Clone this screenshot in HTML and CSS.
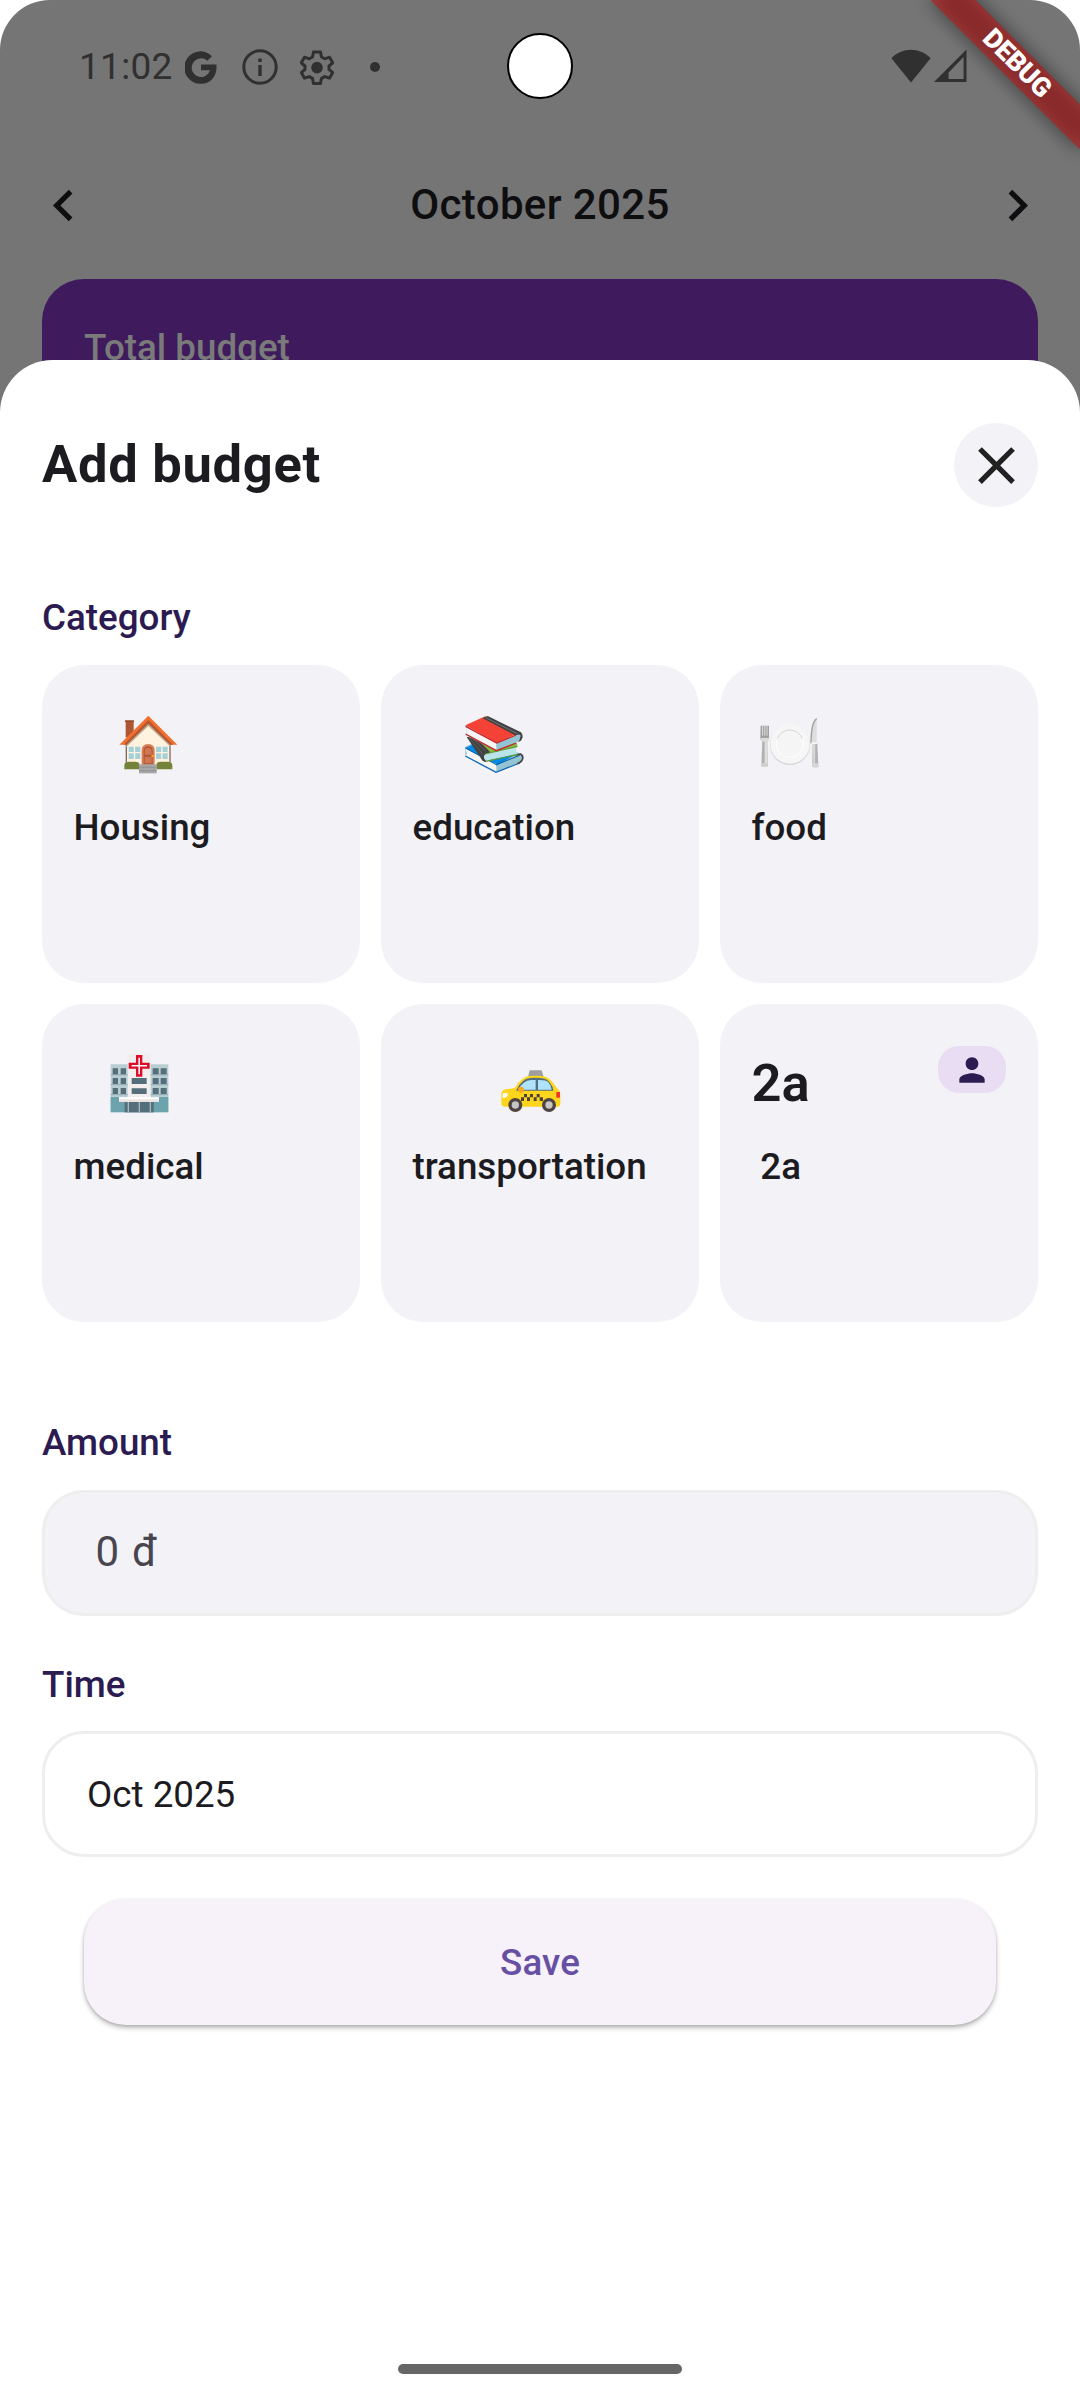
FILE: index.html
```
<!DOCTYPE html>
<html lang="en">
<head>
<meta charset="utf-8">
<title>Add budget</title>
<link rel="stylesheet" href="styles.css">
</head>
<body>
<div class="screen">
  <div class="page">
    <header class="status">
      <span class="clock">11:02</span>
      <svg class="st-google" width="32" height="33" viewBox="0 0 32 33"><path d="M27 5.200 22.300 9.800A9.300 9.300 0 1 0 24.900 19.300H16V13.600H31.400C32.600 24 26.400 32.700 16.400 32.700A16.200 16.200 0 1 1 27 5.200Z" fill="#303030"/></svg>
      <svg class="st-info" width="36" height="36" viewBox="0 0 36 36"><circle cx="18" cy="18" r="16.200" fill="none" stroke="#303030" stroke-width="3"/><path d="M16.300 9.500h3.400v3.400h-3.400zM16.300 16h3.400v11h-3.400z" fill="#303030"/></svg>
      <svg class="st-gear" width="34" height="35" viewBox="0 0 34 35"><path d="M13.500 2h7l1 5 3.200 1.800 4.800-1.600 3.200 5.600-3.700 3.200v3.400l3.700 3.200-3.200 5.600-4.800-1.600-3.200 1.800-1 5h-7l-1-5-3.200-1.800-4.800 1.600L1.300 22.600 5 19.400V16L1.300 12.800 4.500 7.200l4.800 1.600L12.500 7z" fill="none" stroke="#303030" stroke-width="3" stroke-linejoin="round"/><circle cx="17" cy="17.600" r="5.800" fill="#303030"/></svg>
      <span class="st-dot"></span>
      <svg class="st-wifi" width="40" height="34" viewBox="0 0 40 34"><path d="M.4 9.200C11 -2.200 29 -2.200 39.600 9.200L20 33.400Z" fill="#303030"/></svg>
      <svg class="st-signal" width="33" height="34" viewBox="0 0 33 34"><path fill-rule="evenodd" d="M32.500.5V33H0ZM29.600 8 14.600 23.400V30H29.600Z" fill="#303030"/></svg>
    </header>
    <nav class="month">
      <svg width="63" height="63" viewBox="0 0 24 24"><path d="M15.410 7.410 14 6l-6 6 6 6 1.410-1.410L10.830 12z" fill="#0e0e10"/></svg>
      <span class="month-name">October 2025</span>
      <svg width="63" height="63" viewBox="0 0 24 24"><path d="M8.590 16.590 10 18l6-6-6-6-1.410 1.410L13.170 12z" fill="#0e0e10"/></svg>
    </nav>
    <section class="total">Total budget</section>
  </div>

  <main class="sheet">
    <div class="sheet-head">
      <h1>Add budget</h1>
      <button class="close" aria-label="Close"><svg width="63" height="63" viewBox="0 0 24 24"><path d="M19 6.410 17.590 5 12 10.590 6.410 5 5 6.410 10.590 12 5 17.590 6.410 19 12 13.410 17.590 19 19 17.590 13.410 12z" fill="#212121"/></svg></button>
    </div>

    <h2 class="label">Category</h2>
    <div class="grid">
      <div class="card"><div class="item housing">
        <svg width="64" height="64" viewBox="259 171 192 192">
          <path d="M288 197h24v50h-24z" fill="#ae5732"/><path d="M286 196h27v5h-27z" fill="#9c4a29"/>
          <path d="M289 260 356 203l66 57v62H289z" fill="#fff3e0"/>
          <path d="M288 268h4v54h-4zM419 268h4v54h-4z" fill="#806a60"/>
          <path d="M356 203 423 268v8L356 213 290 276v-8z" fill="#bda991"/>
          <path d="M356 182 443 269H424L356 202 288 269H269z" fill="#f26f30"/><path d="M356 195 430 269H421L356 206 291 269H282z" fill="#b55731"/>
          <path d="M297 275h35v37h-35zM379 275h35v37h-35z" fill="#a5d0d8"/><path d="M314.500 275v37M297 293h35M396.500 275v37M379 293h35" stroke="#fff3e0" stroke-width="4"/>
          <path d="M284 343v-12q0-11 12-11h20q14 0 14 11v12zM380 343v-12q0-11 12-11h22q14 0 14 11v12z" fill="#748339"/>
          <path d="M336 330v-43q0-20 19.500-20T375 287v43z" fill="#d87d58"/><path d="M342 328v-39q0-15 13.500-15T369 289v39z" fill="#ad5735"/><path d="M345 299v-10q0-11 10.500-11T366 289v10zM345 305h21v20h-21z" fill="#d27651"/><circle cx="368" cy="303" r="3" fill="#ffc107"/>
          <path d="M328 328h53v27h-53z" fill="#a6a6a6"/><path d="M328 337h53M328 347h53" stroke="#8a8a8a" stroke-width="2"/>
        </svg><span>Housing</span></div></div>
      <div class="card"><div class="item">
        <svg width="64" height="64" viewBox="275 171 192 192">
          <path d="M285 275 345 247 440 292 455 298q6 12-2 24L378 350 285 302z" fill="#94c4d4"/>
          <path d="M285 279 343 252 436 298 377 333z" fill="#0288e5"/>
          <path d="M285 280 378 327V349L285 304 290 296z" fill="#f5f5f5"/><path d="M285 279 378 329 448 301" fill="none" stroke="#01579b" stroke-width="3"/><path d="M285 303 377 352 448 324" fill="none" stroke="#0d66b5" stroke-width="4"/><path d="M436 300 450 297q9 4 7 14t-16 15" fill="none" stroke="#424242" stroke-width="5"/>
          <path d="M290 246 330 246 440 265 442 275 345 300z" fill="#84b944"/>
          <path d="M289 246 318 250 360 292 345 318 337 318z" fill="#424242"/><path d="M298 250 344 306M309 252 354 297" stroke="#686868" stroke-width="2"/>
          <path d="M344 297 435 276 440 297 344 318q-8-10 0-21z" fill="#b9e4ea"/><path d="M344 297 440 275M346 319 442 299" stroke="#609a2e" stroke-width="3.500"/><path d="M352 290q-14 5-14 15t8 15" stroke="#424242" stroke-width="5" fill="none"/>
          <path d="M285 213 379 263 450 234 456 247 450 257 378 287 285 240 290 229z" fill="#94c4d4"/>
          <path d="M286 216 378 263V285L286 238 291 229z" fill="#f5f5f5"/>
          <path d="M285 211 345 184 440 237 379 263z" fill="#f44336"/><path d="M286 214 379 264 438 240M286 237 378 287 438 264" fill="none" stroke="#c62828" stroke-width="4"/>
          <path d="M337 190 352 183 452 232q10 11 0 25l-9 4q9-9 5-20l-15-1z" fill="#424242"/><path d="M346 188 441 236" stroke="#757575" stroke-width="3"/><path d="M437 241q15-6 14 3 0 6-10 10" fill="#94c4d4"/>
        </svg><span>education</span></div></div>
      <div class="card"><div class="item">
        <svg width="64" height="64" viewBox="142 171 192 192">
          <circle cx="241" cy="270" r="60" fill="#d7d7d7"/><circle cx="241" cy="267" r="59" fill="#f6f6f6"/><circle cx="240" cy="266" r="41" fill="#f5f5f5" stroke="#fff" stroke-width="3"/><path d="M203 251a40 40 0 0 1 75 0" fill="none" stroke="#d2d2d2" stroke-width="3"/>
          <path d="M158 251h15l1 83h-19z" fill="#b2b2b2"/><path d="M165 255h8v77h-8z" fill="#dedede"/><path d="M153 212h25v38q0 9-10 9h-6q-10 0-10-9z" fill="#a0a0a0"/><path d="M159 212v30M165.500 212v30M172 212v30" stroke="#e9e9e9" stroke-width="2.500"/><path d="M152 249h27q-1 11-9 11h-8q-8 0-10-11z" fill="#dcdcdc"/><path d="M156 324h15l3 11h-19z" fill="#cfcfcf"/>
          <path d="M321 191v74h-18q-2-68 18-74z" fill="#dedede"/><path d="M321 191q-16 10-17 74" fill="none" stroke="#a0a0a0" stroke-width="4"/><path d="M309 263h14l3 73h-18z" fill="#b2b2b2"/><path d="M310 263h7l-1 65h-5z" fill="#dadada"/><path d="M304 262h19v5h-15z" fill="#f8f8f8"/><path d="M308 325h16l3 11q-8 4-20 0z" fill="#d5d5d5"/>
        </svg><span>food</span></div></div>
      <div class="card"><div class="item">
        <svg width="64" height="64" viewBox="229 168 192 192">
          <path d="M240 208h173v144H240z" fill="#b9ced3"/><path d="M240 306h173v46H240z" fill="#6ca4ae"/>
          <path d="M291 177h69v136h-69z" fill="#f1eeed"/>
          <path d="M246 220h16v19h-16zm24 0h16v19h-16zM246 249h16v18h-16zm24 0h16v18h-16zM246 279h16v18h-16zm24 0h16v18h-16zM366 220h18v19h-18zm24 0h18v19h-18zM366 249h18v18h-18zm24 0h18v18h-18zM366 279h18v18h-18zm24 0h18v18h-18zM303 249h45v18h-45zm0 31h45v17h-45z" fill="#546e7a"/>
          <path d="M240 239.500h51M240 269h51M240 299h51M360 239.500h53M360 269h53M360 299h53" stroke="#91aab2" stroke-width="3"/>
          <path d="M316 180h19v23h22v18h-22v24h-19v-24h-22v-18h22z" fill="#dc0d28"/><path d="M325.500 188v50M303 212h46" stroke="#fff" stroke-width="4.500"/>
          <path d="M282 320h87v32h-87z" fill="#546e7a"/><path d="M293 320v32M326 320v32M359 320v32" stroke="#a5b8be" stroke-width="4"/>
          <path d="M265 307h120v14H265z" fill="#e9e4e2"/><path d="M265 307h120v6H265z" fill="#fff"/>
        </svg><span>medical</span></div></div>
      <div class="card"><div class="item">
        <svg width="64" height="64" viewBox="381 168 192 192">
          <path d="M476 226h36l6 20h-47z" fill="#9e9e9e"/>
          <path d="M391 299q0-15 16-17 15-1 25-4 21-34 45-35 26-3 46 2 15 4 34 33 11 8 11 24v22q0 11-8 11H401q-10 0-10-10z" fill="#fdd51c"/>
          <path d="M435 287q17-36 42-38 26-2 44 2 13 4 24 26l2 10z" fill="#546e7a"/><path d="M442 284q14-27 38-29h14v29zM501 255q23-1 31 7 8 8 10 22h-41z" fill="#aee3fb"/>
          <circle cx="450" cy="284" r="9" fill="#f9a61a"/><path d="M556 291h11v17h-11z" fill="#f9311f"/><path d="M396 294h14q2 12-7 14h-9z" fill="#fffdf3"/>
          <path d="M459 297h9v10h-9zm18 0h9v10h-9zm20 0h9v10h-9zM450 307h9v11h-9zm18 0h9v11h-9zm20 0h9v11h-9zm18 0h10v11h-10z" fill="#4e433b"/>
          <circle cx="433" cy="330" r="21" fill="#4e433e"/><circle cx="433" cy="330" r="11" fill="#c5c5c5"/><circle cx="534" cy="330" r="21" fill="#4e433e"/><circle cx="534" cy="330" r="11" fill="#c5c5c5"/>
        </svg><span>transportation</span></div></div>
      <div class="card"><div class="item"><b class="initials">2a</b><span>2a</span></div>
        <div class="badge"><svg width="38" height="38" viewBox="0 0 24 24"><path d="M12 12c2.210 0 4-1.790 4-4s-1.790-4-4-4-4 1.790-4 4 1.790 4 4 4zm0 2c-2.670 0-8 1.340-8 4v2h16v-2c0-2.660-5.330-4-8-4z" fill="#2b1b50"/></svg></div>
      </div>
    </div>

    <h2 class="label">Amount</h2>
    <div class="field amount">0 đ</div>
    <h2 class="label">Time</h2>
    <div class="field time">Oct 2025</div>
    <button class="save">Save</button>
    <div class="home"></div>
  </main>

  <div class="camera"></div>
  <div class="banner-clip"><div class="banner-shadow"></div><div class="banner">DEBUG</div></div>
</div>
</body>
</html>
```
FILE: styles.css
```
* { box-sizing: border-box; }
body { margin: 0; background: #fff; font-family: Roboto, sans-serif; }
svg { display: block; flex: none; }
h1, h2 { margin: 0; }
button { border: 0; padding: 0; font-family: inherit; }

.screen {
  position: relative;
  width: 1080px;
  height: 2400px;
  overflow: hidden;
  border-radius: 50px 50px 0 0;
  background: #757575;
}
.page { height: 420px; }

.status {
  display: flex;
  align-items: center;
  height: 134px;
  padding: 0 113px 0 79px;
  color: #303030;
}
.clock { width: 106px; font-size: 37px; line-height: 44px; letter-spacing: .3px; margin-top: -1px; }
.st-info { margin-left: 24.500px; }
.st-gear { margin-left: 22px; }
.st-dot { width: 10px; height: 10px; margin-left: 36px; border-radius: 50%; background: #303030; }
.st-wifi { margin-left: auto; margin-right: 3px; margin-top: -2px; }
.st-signal { margin-top: -2px; }

.month {
  display: flex;
  justify-content: space-between;
  align-items: center;
  height: 145px;
  padding: 0 31.500px 2px;
}
.month-name {
  font-size: 42px;
  line-height: 48px;
  font-weight: 500;
  letter-spacing: .39px;
  color: #0e0e10;
  margin-top: -2px;
}
.total {
  height: 141px;
  margin: 0 42px;
  padding: 48px 42px;
  border-radius: 42px 42px 0 0;
  background: #3f1b5e;
  color: #7a7a7a;
  font-size: 36.750px;
  line-height: 42px;
  font-weight: 500;
}

.sheet {
  position: absolute;
  inset: 360px 0 0;
  display: flex;
  flex-direction: column;
  padding: 63px 42px 26px;
  border-radius: 52.500px 52.500px 0 0;
  background: #fff;
}
.sheet-head { display: flex; justify-content: space-between; margin-bottom: 90px; }
.sheet-head h1 { font-size: 52.500px; line-height: 82px; font-weight: 700; letter-spacing: .7px; color: #1c1b1f; }
.close {
  display: flex;
  align-items: center;
  justify-content: center;
  width: 84px;
  height: 84px;
  border-radius: 50%;
  background: #f2f2f7;
}
.label { height: 42px; font-size: 36.750px; line-height: 42px; font-weight: 500; color: #2b1b50; }

.grid {
  display: grid;
  grid-template-columns: repeat(3, 318px);
  grid-auto-rows: 318px;
  gap: 21px;
  margin: 26px 0 100px;
}
.card {
  display: flex;
  align-items: flex-start;
  justify-content: space-between;
  padding: 47px 31.500px;
  border-radius: 42px;
  background: #f2f2f7;
}
.item { display: flex; flex-direction: column; align-items: center; gap: 31px; }
.item span { font-size: 36.750px; line-height: 42px; font-weight: 500; color: #1c1b1f; }
.housing span { padding-right: 13px; }
.initials { height: 64px; font-size: 52.500px; line-height: 64px; font-weight: 600; color: #1c1b1f; }
.badge {
  display: flex;
  align-items: center;
  justify-content: center;
  width: 68px;
  height: 47px;
  margin: -5px 1px 0 0;
  border-radius: 21px;
  background: #e9ddf4;
}

.field {
  height: 126px;
  border: 3px solid #eeeeef;
  border-radius: 42px;
}
.amount {
  margin: 26px 0 48px;
  padding-left: 50.500px;
  background: #f2f2f7;
  font-size: 42px;
  line-height: 118px;
  letter-spacing: 1.300px;
  color: #49454f;
}
.time {
  margin: 25px 0 42px;
  padding-left: 42px;
  font-size: 36.750px;
  line-height: 122px;
  color: #1c1b1f;
}
.save {
  height: 126px;
  margin: 0 42px;
  border-radius: 42px;
  background: #f7f2fa;
  box-shadow: 0 3px 5px rgba(0, 0, 0, .25), 0 1px 3px rgba(0, 0, 0, .12);
  color: #6750a4;
  font-size: 36.750px;
  font-weight: 500;
  letter-spacing: .1px;
}
.home {
  width: 284px;
  height: 10px;
  margin: auto auto 0;
  border-radius: 5px;
  background: #666;
}

.camera {
  position: absolute;
  left: 507px;
  top: 33px;
  width: 66px;
  height: 66px;
  border: 2px solid #000;
  border-radius: 50%;
  background: #fff;
}

.banner-clip { position: absolute; top: 0; right: 0; width: 210px; height: 210px; overflow: hidden; }
.banner, .banner-shadow {
  position: absolute;
  left: 105px;
  top: 73.500px;
  width: 210px;
  height: 31.500px;
  transform-origin: 105px -73.500px;
  transform: rotate(45deg);
}
.banner {
  background: rgba(183, 28, 28, .627);
  color: #fff;
  font-size: 26.800px;
  line-height: 30px;
  font-weight: 900;
  letter-spacing: -.3px;
  text-align: center;
}
.banner-shadow { background: rgba(0, 0, 0, .5); filter: blur(10px); }
```
